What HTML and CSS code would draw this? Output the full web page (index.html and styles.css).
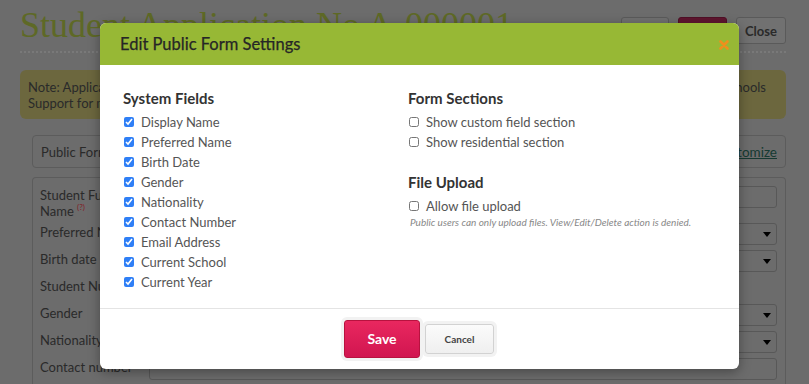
FILE: index.html
```html
<!DOCTYPE html>
<html lang="en">
<head>
<meta charset="utf-8">
<title>Edit Public Form Settings</title>
<link rel="stylesheet" href="styles.css">
</head>
<body>
<div class="page">
  <div class="page-head">
    <h1 class="page-title">Student Application No A-000001</h1>
    <div class="page-actions">
      <span class="pbtn pbtn-blank"></span>
      <span class="pbtn pbtn-red"></span>
      <span class="pbtn pbtn-close">Close</span>
    </div>
  </div>
  <div class="note">
    <div class="note-line note-split"><span>Note: Application forms</span><span>are for schools</span></div>
    <div class="note-line">Support for multiple languages is coming soon.</div>
  </div>
  <div class="pf-bar">
    <span>Public Form</span>
    <a class="pf-link">Customize</a>
  </div>
  <div class="form-panel">
    <div class="frow frow-tall"><div class="flabel">Student Full<br>Name <sup class="req">(?)</sup></div><div class="finput"></div></div>
    <div class="frow"><div class="flabel">Preferred Name</div><div class="finput fselect"></div></div>
    <div class="frow"><div class="flabel">Birth date</div><div class="finput fselect"></div></div>
    <div class="frow"><div class="flabel">Student Number</div><div class="fempty"></div></div>
    <div class="frow"><div class="flabel">Gender</div><div class="finput fselect"></div></div>
    <div class="frow"><div class="flabel">Nationality</div><div class="finput fselect"></div></div>
    <div class="frow"><div class="flabel">Contact number</div><div class="finput"></div></div>
  </div>
</div>

<div class="backdrop"></div>

<div class="modal">
  <div class="modal-header">
    <h2 class="modal-title">Edit Public Form Settings</h2>
    <span class="modal-close"><svg width="10" height="10" viewBox="0 0 10 10"><path d="M1.5 1.5 L8.5 8.5 M8.5 1.5 L1.5 8.5" stroke="#ef8f1c" stroke-width="2.6" stroke-linecap="round"/></svg></span>
  </div>
  <div class="modal-body">
    <div class="col">
      <h3 class="sec-title">System Fields</h3>
      <label class="opt"><input type="checkbox" checked><span>Display Name</span></label>
      <label class="opt"><input type="checkbox" checked><span>Preferred Name</span></label>
      <label class="opt"><input type="checkbox" checked><span>Birth Date</span></label>
      <label class="opt"><input type="checkbox" checked><span>Gender</span></label>
      <label class="opt"><input type="checkbox" checked><span>Nationality</span></label>
      <label class="opt"><input type="checkbox" checked><span>Contact Number</span></label>
      <label class="opt"><input type="checkbox" checked><span>Email Address</span></label>
      <label class="opt"><input type="checkbox" checked><span>Current School</span></label>
      <label class="opt"><input type="checkbox" checked><span>Current Year</span></label>
    </div>
    <div class="col">
      <h3 class="sec-title">Form Sections</h3>
      <label class="opt"><input type="checkbox"><span>Show custom field section</span></label>
      <label class="opt"><input type="checkbox"><span>Show residential section</span></label>
      <h3 class="sec-title sec-gap">File Upload</h3>
      <label class="opt"><input type="checkbox"><span>Allow file upload</span></label>
      <p class="hint">Public users can only upload files. View/Edit/Delete action is denied.</p>
    </div>
  </div>
  <div class="modal-footer">
    <button class="btn btn-save">Save</button>
    <button class="btn btn-cancel">Cancel</button>
  </div>
</div>
</body>
</html>
```
FILE: styles.css
```css
* { box-sizing: border-box; }
html, body { margin: 0; padding: 0; }
body {
  width: 809px;
  height: 384px;
  overflow: hidden;
  background: #d8d8d8;
  font-family: Lato, "Open Sans", sans-serif;
  position: relative;
}

/* ---------- background page ---------- */
.page { padding: 0 23px 0 20px; }
.page-head {
  display: flex;
  justify-content: space-between;
  align-items: flex-start;
  border-bottom: 2px dotted #f2f2f2;
  height: 53px;
}
.page-title {
  margin: 0;
  padding-top: 3px;
  font-family: "Liberation Serif", serif;
  font-weight: 400;
  font-size: 36px;
  line-height: 44px;
  color: #bcd24c;
  white-space: nowrap;
}
.page-actions { display: flex; gap: 9px; padding-top: 17px; }
.pbtn {
  height: 27px;
  border-radius: 3px;
  border: 1px solid #b4b4b4;
  display: flex;
  align-items: center;
  justify-content: center;
  font-weight: 700;
  font-size: 13px;
  color: #555;
}
.pbtn-blank { width: 48px; background: #e0e0e0; }
.pbtn-red { width: 49px; background: #be2a5e; border-color: #a0204c; }
.pbtn-close { width: 50px; background: #e2e2e2; }

.note {
  margin-top: 17px;
  height: 49px;
  background: #d8cf7c;
  border-radius: 6px;
  padding: 9px 20px 0 8px;
  font-size: 13px;
  line-height: 16px;
  color: #555;
}
.note-line { white-space: nowrap; overflow: hidden; }
.note-split { display: flex; justify-content: space-between; }

.pf-bar {
  margin: 16px 0 0 12px;
  height: 33px;
  border: 1px solid #b8b8b8;
  border-radius: 4px;
  display: flex;
  align-items: center;
  justify-content: space-between;
  padding: 0 8px;
  font-size: 13px;
  color: #555;
}
.pf-link { color: #2f7565; text-decoration: underline; font-weight: 400; font-size: 13.5px; }

.form-panel {
  margin: 9px 0 0 12px;
  height: 220px;
  border: 1px solid #b8b8b8;
  border-bottom: 0;
  border-radius: 4px 4px 0 0;
  padding: 8px 8px 0 7px;
  display: flex;
  flex-direction: column;
  gap: 5px;
}
.frow { display: flex; height: 22px; }
.frow-tall { height: 32px; }
.flabel {
  width: 109px;
  flex: none;
  padding-top: 1px;
  font-size: 13px;
  line-height: 16px;
  color: #555;
  white-space: nowrap;
  overflow: hidden;
}
.req { color: #ff3c4c; font-size: 8px; vertical-align: 6px; line-height: 0; }
.finput {
  flex: 1;
  height: 22px;
  border: 1px solid #b0b0b0;
  border-radius: 3px;
  position: relative;
}
.fselect::after {
  content: "";
  position: absolute;
  right: 5px;
  top: 8px;
  border-left: 4px solid transparent;
  border-right: 4px solid transparent;
  border-top: 5px solid #000;
}
.fempty { flex: 1; }

.backdrop {
  position: absolute;
  inset: 0;
  background: rgba(0, 0, 0, 0.5);
}

/* ---------- modal ---------- */
.modal {
  position: absolute;
  left: 100px;
  top: 23px;
  width: 639px;
  height: 346px;
  background: #fff;
  border-radius: 6px;
  overflow: hidden;
  box-shadow: 0 3px 12px rgba(0, 0, 0, 0.35);
}
.modal-header {
  height: 42px;
  background: #97b835;
  display: flex;
  align-items: center;
  justify-content: space-between;
  padding: 0 10px 0 20px;
}
.modal-title {
  margin: 0;
  font-size: 16.5px;
  font-weight: 400;
  color: #262626;
  -webkit-text-stroke: 0.25px #262626;
}
.modal-close { display: flex; width: 10px; height: 10px; margin-top: 2px; }

.modal-body {
  height: 244px;
  border-bottom: 1px solid #e4e4e4;
  padding: 24px 20px 0 23px;
  display: grid;
  grid-template-columns: 285px 1fr;
}
.col { display: flex; flex-direction: column; }
.sec-title {
  margin: 0 0 5px;
  font-size: 15px;
  line-height: 18px;
  font-weight: 700;
  color: #333;
}
.sec-gap { margin-top: 21px; }
.opt {
  display: flex;
  align-items: center;
  height: 20px;
  font-size: 13px;
  color: #555;
}
.opt input {
  width: 10px;
  height: 10px;
  margin: 0 7px 0 1px;
  accent-color: #2f7ff6;
}
.hint {
  margin: 0 0 0 2px;
  font-size: 10px;
  line-height: 13px;
  font-style: italic;
  color: #888;
}

.modal-footer {
  height: 59px;
  display: flex;
  align-items: center;
  justify-content: center;
  gap: 5px;
  padding-right: 1px;
}
.btn {
  font-family: Lato, "Open Sans", sans-serif;
  border-radius: 3px;
  cursor: pointer;
  box-shadow: 0 0 0 3px #f2f2f2;
}
.btn-save {
  width: 76px;
  height: 38px;
  background: linear-gradient(#e9275f, #d11550);
  border: 1px solid #b8123f;
  color: #fff;
  font-size: 14px;
  font-weight: 700;
}
.btn-cancel {
  width: 69px;
  height: 30px;
  background: linear-gradient(#fbfbfb, #efefef);
  border: 1px solid #d2d2d2;
  color: #444;
  font-size: 10px;
  font-weight: 700;
}
```
